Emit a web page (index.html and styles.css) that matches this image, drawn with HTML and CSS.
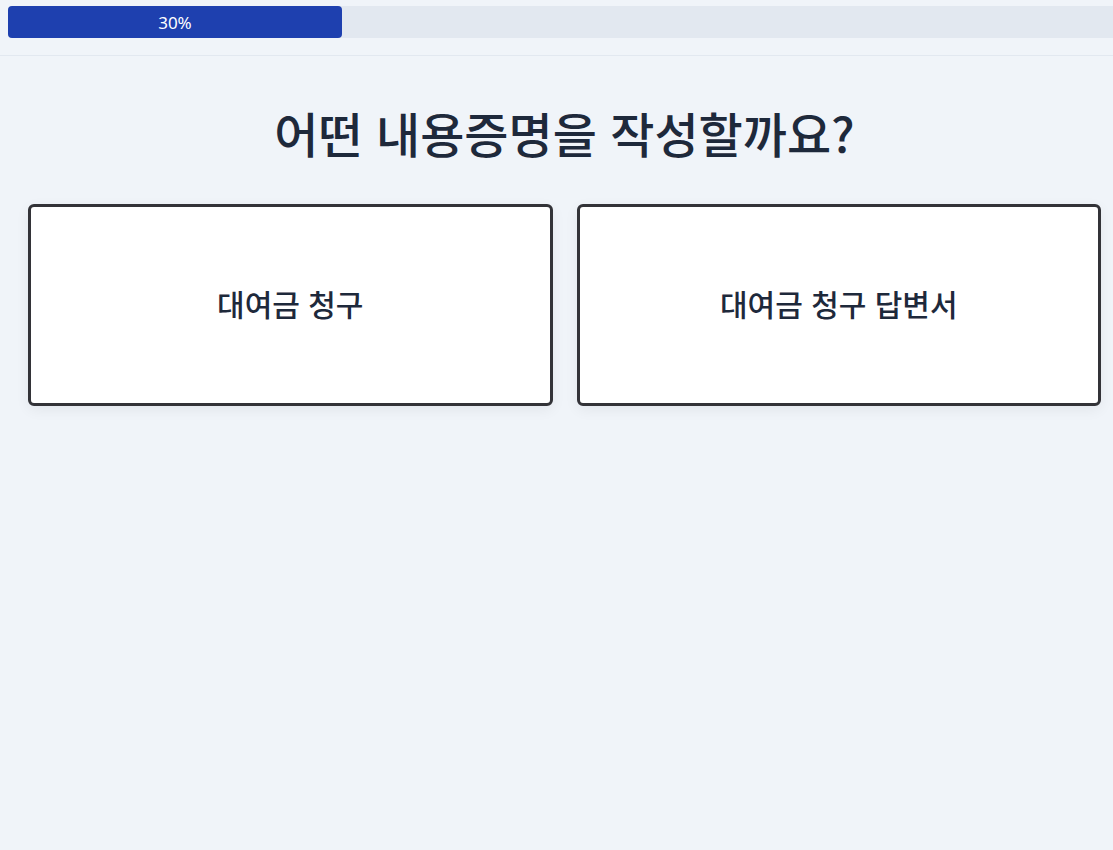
FILE: index.html
```html
<!DOCTYPE html>
<html lang="ko">
<head>
<meta charset="utf-8">
<title>내용증명 작성</title>
<link rel="stylesheet" href="styles.css">
</head>
<body>
<header class="topbar">
  <div class="progress">
    <div class="progress-fill" style="width:30%">30%</div>
  </div>
</header>
<main class="content">
  <h1 class="title">어떤 내용증명을 작성할까요?</h1>
  <div class="choices">
    <button class="choice" type="button">대여금 청구</button>
    <button class="choice" type="button">대여금 청구 답변서</button>
  </div>
</main>
</body>
</html>
```
FILE: styles.css
```css
html, body {
  margin: 0;
  padding: 0;
  background: #f0f4f9;
  overflow: hidden;
}
body {
  font-family: "Noto Sans", "Noto Sans CJK KR", sans-serif;
  color: #1e293b;
  width: 1113px;
  height: 850px;
}
.topbar {
  box-sizing: border-box;
  height: 56px;
  padding: 6px 0 0 8px;
  border-bottom: 1px solid #e2e8f0;
  overflow: hidden;
}
.progress {
  width: 1113px;
  height: 32px;
  background: #e2e8f0;
  border-radius: 4px;
  display: flex;
}
.progress-fill {
  background: #1e40af;
  border-radius: 4px;
  color: #ffffff;
  font-size: 17px;
  display: flex;
  align-items: center;
  justify-content: center;
}
.content {
  box-sizing: border-box;
  width: 1113px;
  padding: 0 12px 0 28px;
}
.title {
  margin: 47px 0 43px;
  text-align: center;
  font-family: "Noto Sans CJK KR", sans-serif;
  font-size: 48px;
  line-height: 58px;
  font-weight: 500;
  color: #1e293b;
}
.choices {
  display: grid;
  grid-template-columns: 1fr 1fr;
  gap: 24px;
}
.choice {
  box-sizing: border-box;
  height: 202px;
  background: #ffffff;
  border: 3px solid #333338;
  border-radius: 6px;
  box-shadow: 0 4px 14px rgba(15, 23, 42, 0.06);
  font-family: "Noto Sans CJK KR", sans-serif;
  font-size: 30px;
  font-weight: 500;
  color: #1e293b;
  cursor: pointer;
  padding: 0 0 4px;
}
```
